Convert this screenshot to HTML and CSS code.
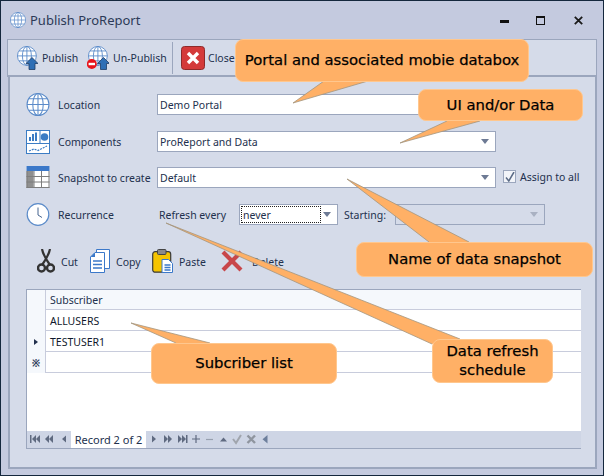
FILE: index.html
```html
<!DOCTYPE html>
<html lang="en">
<head>
<meta charset="utf-8">
<title>Publish ProReport</title>
<link rel="stylesheet" href="styles.css">
</head>
<body>
<svg class="defs" width="0" height="0" aria-hidden="true">
  <defs>
    <g id="globe" fill="none" stroke="#5b8bc9" stroke-width="1">
      <circle cx="11" cy="11" r="10.5" fill="#fff"/>
      <ellipse cx="11" cy="11" rx="5" ry="10.5"/>
      <path d="M11 .5v21M.5 11h21M2.3 5.5h17.4M2.3 16.5h17.4"/>
    </g>
    <g id="uparrow">
      <path d="M5.5 0 11.5 6H8.5V12H2.5V6H-.5Z" fill="#2f6fb5" stroke="#1f3d66" stroke-width=".8"/>
    </g>
  </defs>
</svg>
<div class="window">
  <header class="titlebar">
    <svg class="title-icon" width="16" height="16" viewBox="0 0 22 22"><use href="#globe"/></svg>
    <span class="title-text">Publish ProReport</span>
    <div class="controls">
      <span class="ctl-min"></span>
      <span class="ctl-max"></span>
      <svg class="ctl-close" width="9" height="9" viewBox="0 0 9 9"><path d="M.8.8l7.4 7.4M8.2.8.8 8.2" stroke="#1a1a1a" stroke-width="1.8"/></svg>
    </div>
  </header>
  <div class="toolbar">
    <div class="tool tool-publish">
      <svg width="21" height="24" viewBox="0 0 21 24"><g transform="scale(.9)"><use href="#globe"/></g><use href="#uparrow" x="9.5" y="11.5"/></svg>
      <span>Publish</span>
    </div>
    <div class="tool tool-unpublish">
      <svg width="22" height="24" viewBox="0 0 22 24"><g transform="translate(1 0) scale(.9)"><use href="#globe"/></g><use href="#uparrow" x="11" y="11.5"/><circle cx="4.8" cy="18" r="5" fill="#e8141c"/><rect x="1.6" y="16.8" width="6.4" height="2.4" fill="#fff"/></svg>
      <span>Un-Publish</span>
    </div>
    <div class="sep"></div>
    <div class="tool tool-close">
      <svg width="24" height="24" viewBox="0 0 24 24"><rect x=".5" y=".5" width="23" height="23" rx="3" fill="#d43a3a" stroke="#8e2a2a"/><path d="M7 7l10 10M17 7 7 17" stroke="#fff" stroke-width="3.4"/></svg>
      <span>Close</span>
    </div>
  </div>
  <main class="panel">
    <div class="form">
      <div class="row">
        <svg class="row-icon" width="23" height="23" viewBox="0 0 22 22"><use href="#globe"/></svg>
        <span class="row-label">Location</span>
        <div class="field field-wide">Demo Portal</div>
      </div>
      <div class="row">
        <svg class="row-icon" width="24" height="24" viewBox="0 0 24 24">
          <rect x=".5" y=".5" width="23" height="23" fill="#fff" stroke="#3b7cc4"/>
          <path d="M.5 13.5h23M14 .5v13" stroke="#3b7cc4"/>
          <path d="M3 11V7h2v4zM6 11V4h2v7zM9 11V2.500h2V11z" fill="#3b7cc4"/>
          <circle cx="18.500" cy="7" r="3.800" fill="#3b7cc4"/>
          <path d="M3 21l5-2 4 1.500 5-2.500 4-2" fill="none" stroke="#3b7cc4" stroke-width="1.200" stroke-dasharray="2 1"/>
        </svg>
        <span class="row-label">Components</span>
        <div class="field field-wide field-combo">ProReport and Data<i class="caret"></i></div>
      </div>
      <div class="row">
        <svg class="row-icon" width="23" height="22" viewBox="0 0 23 22">
          <rect width="23" height="22" fill="#fff"/>
          <rect width="23" height="5" fill="#3b78c9"/>
          <rect y="5" width="7" height="17" fill="#8f8f8f"/>
          <path d="M7.500 5v17M15 5v17M0 10.500h23M0 16h23M.5 5v17M22.500 5v17M0 21.500h23" stroke="#7d7d7d"/>
        </svg>
        <span class="row-label">Snapshot to create</span>
        <div class="field field-wide field-combo">Default<i class="caret"></i></div>
        <span class="check"><svg width="10" height="10" viewBox="0 0 10 10"><path d="M1 5.500 3.800 9 9 0" fill="none" stroke="#5a6a85" stroke-width="1.500"/></svg></span>
        <span class="check-label">Assign to all</span>
      </div>
      <div class="row">
        <svg class="row-icon" width="23" height="23" viewBox="0 0 23 23"><circle cx="11.500" cy="11.500" r="10.800" fill="#fff" stroke="#5b8bc9" stroke-width="1.200"/><path d="M11.500 4.500v7.500l4 2.500" fill="none" stroke="#46648f" stroke-width="1"/></svg>
        <span class="row-label">Recurrence</span>
        <span class="refresh-label">Refresh every</span>
        <div class="field field-never"><span class="focus">never</span><i class="caret"></i></div>
        <span class="starting-label">Starting:</span>
        <div class="field field-disabled"><i class="caret caret-dim"></i></div>
      </div>
    </div>
    <div class="actions">
      <div class="act act-cut">
        <svg width="18" height="24" viewBox="0 0 18 24"><path d="M5 0c1 5 3 9 8 16M13 0c-1 5-3 9-8 16" fill="none" stroke="#333" stroke-width="2.200"/><circle cx="4.500" cy="19" r="3.500" fill="none" stroke="#333" stroke-width="2.400"/><circle cx="13.500" cy="19" r="3.500" fill="none" stroke="#333" stroke-width="2.400"/></svg>
        <span>Cut</span>
      </div>
      <div class="act act-copy">
        <svg width="20" height="24" viewBox="0 0 20 24"><path d="M6.500.5h13v19h-13z" fill="#fff" stroke="#3b78c9"/><path d="M5 3.500h9.500v20H.500V8z" fill="#fff" stroke="#3b78c9"/><path d="M.5 8 5 3.500V8z" fill="#3b78c9"/><path d="M3 12h9M3 15.500h9M3 19h9" stroke="#3b78c9" stroke-width="1.400"/></svg>
        <span>Copy</span>
      </div>
      <div class="act act-paste">
        <svg width="21" height="24" viewBox="0 0 21 24"><rect x=".7" y="2.700" width="18" height="20.500" rx="2.500" fill="#f5c400" stroke="#3a3a3a" stroke-width="1.200"/><rect x="5.500" y=".5" width="8.500" height="5" rx="1" fill="#8a8a8a" stroke="#444"/><path d="M10 10.500h6.500l4 4v9H10z" fill="#fff" stroke="#3b78c9"/><path d="M12.500 16h6M12.500 18.500h6M12.500 21h6" stroke="#3b78c9" stroke-width="1.300"/></svg>
        <span>Paste</span>
      </div>
      <div class="act act-delete">
        <svg width="24" height="22" viewBox="0 0 24 22"><path d="M3 2l18 18M21 2 3 20" stroke="#c8464a" stroke-width="4.200"/></svg>
        <span>Delete</span>
      </div>
    </div>
    <section class="grid">
      <div class="grid-row grid-head"><span class="ind"></span><span class="cell">Subscriber</span></div>
      <div class="grid-row"><span class="ind"></span><span class="cell cell-data">ALLUSERS</span></div>
      <div class="grid-row"><span class="ind"><i class="cur"></i></span><span class="cell cell-data">TESTUSER1</span></div>
      <div class="grid-row"><span class="ind ind-new">&#x203B;</span><span class="cell"></span></div>
      <div class="grid-space"></div>
      <div class="nav">
        <svg width="44" height="17" viewBox="0 0 44 17" fill="#5f6a80"><path d="M3 4h1.500v8H3zM9 4v8L5 8zM13 4v8L9 8zM22 4v8l-4-4zM26 4v8l-4-4zM39 4.500v7l-4-3.500z"/></svg>
        <span class="record">Record 2 of 2</span>
        <svg width="125" height="17" viewBox="0 0 125 17"><g fill="#5f6a80"><path d="M6 4.500v7l4-3.500zM18 4v8l4-4zM22 4v8l4-4zM32 4v8l4-4zM36 4v8l4-4zM40 4h1.500v8H40z"/><path d="M46 8h8M50 4v8" stroke="#5f6a80" stroke-width="1.200"/></g><path d="M60 8.500h7" stroke="#98a0b0" stroke-width="1.200"/><path d="M74 10.500l3.500-4 3.500 4z" fill="#5f6a80"/><path d="M87 8l3 4 5-8" fill="none" stroke="#a0a5ad" stroke-width="2"/><path d="M101.500 4.500l7.500 7.500M109 4.500 101.500 12" stroke="#8f959f" stroke-width="2.400"/><path d="M121.500 4v8.500l-5-4.200z" fill="#6d7f9c"/></svg>
      </div>
    </section>
  </main>
</div>
<svg class="tails" width="604" height="476" viewBox="0 0 604 476" aria-hidden="true">
  <g fill="#ffb066" stroke="#a3957f" stroke-width=".8">
    <path d="M324 81 293 103 368 81"/>
    <path d="M447 121 400 143 480 121"/>
    <path d="M429 242 347 179 469 242"/>
    <path d="M432 344 166 223 460 339"/>
    <path d="M176 343 131 323 210 343"/>
  </g>
</svg>
<div class="callout c-portal">Portal and associated mobie databox</div>
<div class="callout c-ui">UI and/or Data</div>
<div class="callout c-name">Name of data snapshot</div>
<div class="callout c-refresh">Data refresh<br>schedule</div>
<div class="callout c-list">Subcriber list</div>
</body>
</html>
```
FILE: styles.css
```css
* { box-sizing: border-box; }
html, body { margin: 0; padding: 0; }
body {
  width: 604px;
  height: 476px;
  position: relative;
  overflow: hidden;
  font-family: "Noto Sans", "Liberation Sans", sans-serif;
  font-size: 10.5px;
  color: #22304d;
}
.defs { position: absolute; }
.window {
  width: 604px;
  height: 476px;
  background: #c4cadf;
  border: 1px solid #14273d;
  display: flex;
  flex-direction: column;
  padding: 0 6px 6px;
}
.titlebar {
  height: 38px;
  flex: none;
  display: flex;
  align-items: center;
  padding: 0 0 0 3px;
}
.title-icon { flex: none; }
.title-text { margin-left: 4px; font-size: 13px; color: #2c3a57; }
.controls { margin-left: auto; display: flex; align-items: center; }
.ctl-min { width: 9px; height: 3px; background: #111; margin-top: 3px; }
.ctl-max { width: 9px; height: 9px; border: 1px solid #111; border-top-width: 2px; margin-left: 27px; margin-top: 0; }
.ctl-close { margin-left: 29px; margin-right: 14px; }
.toolbar {
  height: 38px;
  flex: none;
  background: #d5dbe9;
  border: 1px solid #9ba6bd;
  border-bottom: 2px solid #9ba6bd;
  display: flex;
  align-items: center;
  padding-left: 9px;
}
.tool { display: flex; align-items: center; }
.tool span { margin-left: 4px; }
.tool-publish { width: 70px; flex: none; }
.tool-unpublish { width: 85px; flex: none; }
.sep { width: 1px; height: 32px; background: #9ba6bd; margin: 0 8px 0 0; }
.tool-close span { margin-left: 3px; }
.panel {
  flex: 1;
  background: #d5dbe9;
  border: 2px solid #9ba6bd;
  border-top: 0;
  margin: 0 0 0 1px;
  padding: 17px 14px 0 16px;
  display: flex;
  flex-direction: column;
}
.form {
  display: grid;
  grid-template-rows: 37px 36px 37px 21px;
}
.row { display: flex; align-items: flex-start; height: 21px; }
.row-icon { flex: none; width: 24px; margin-top: -1px; }
.row-label { width: 99px; flex: none; margin-left: 8px; line-height: 23px; white-space: nowrap; }
.field {
  height: 21px;
  background: #fff;
  border: 1px solid #9ba6bd;
  line-height: 21px;
  padding-left: 2px;
  position: relative;
}
.field-wide { width: 339px; flex: none; }
.caret {
  position: absolute;
  right: 6px;
  top: 7px;
  width: 0;
  height: 0;
  border: 4px solid transparent;
  border-top: 5px solid #6d7a94;
  border-bottom: 0;
}
.caret-dim { border-top-color: #a9b1c2; }
.check {
  width: 13px;
  height: 13px;
  margin-left: 7px;
  margin-top: 3px;
  border: 1px solid #9ba6bd;
  background: #f2f4f9;
  display: flex;
  align-items: center;
  justify-content: center;
  flex: none;
}
.check-label { margin-left: 4px; line-height: 21px; white-space: nowrap; }
.refresh-label { margin-left: 2px; width: 80px; flex: none; line-height: 23px; white-space: nowrap; }
.field-never { width: 99px; flex: none; padding: 1px 0 0 1px; line-height: 17px; }
.focus { display: block; width: 80px; height: 17px; border: 1px dotted #222; padding-left: 1px; line-height: 17px; }
.starting-label { margin-left: 6px; width: 51px; flex: none; line-height: 23px; }
.field-disabled { width: 150px; flex: none; background: transparent; }
.actions { display: flex; align-items: center; height: 24px; margin-top: 24px; padding-left: 11px; }
.act { display: flex; align-items: center; flex: none; }
.act span { margin-left: 6px; margin-top: 2px; }
.act-cut { width: 53px; }
.act-copy { width: 62px; }
.act-paste { width: 68px; }
.act-delete span { margin-left: 8px; }
.grid {
  margin-top: 16px;
  height: 160px;
  width: 555px;
  background: #fff;
  border: 1px solid #9ba6bd;
  border-right: 0;
  display: flex;
  flex-direction: column;
}
.grid-row { height: 21px; flex: none; display: flex; border-bottom: 1px solid #c8ccdc; }
.grid-head { height: 20px; background: #f5f8fc; }
.ind {
  width: 18px;
  flex: none;
  background: #f5f8fc;
  margin-bottom: -1px;
  display: flex;
  align-items: center;
  justify-content: center;
  font-size: 10px;
  font-weight: 700;
  color: #2c3a57;
}
.cur { width: 0; height: 0; border: 3.500px solid transparent; border-left: 4px solid #22304d; border-right: 0; }
.cell { flex: 1; border-left: 1px solid #c8ccdc; padding-left: 4px; line-height: 20px; }
.cell-data { color: #10182c; line-height: 22px; }
.grid-space { flex: 1; }
.nav { height: 17px; flex: none; background: #ced5e5; display: flex; }
.record { width: 75px; flex: none; background: #fff; text-align: center; line-height: 18px; font-size: 11px; }
.tails { position: absolute; left: 0; top: 0; }
.callout {
  position: absolute;
  display: flex;
  align-items: center;
  justify-content: center;
  text-align: center;
  background: #ffb066;
  border: 1px solid #ffc78e;
  border-radius: 8px;
  padding-bottom: 2px;
  font-family: "DejaVu Sans", sans-serif;
  font-size: 14.8px;
  -webkit-text-stroke: .25px #000;
  line-height: 19px;
  color: #000;
}
.c-portal { left: 235px; top: 39px; width: 294px; height: 43px; }
.c-ui { left: 418px; top: 89px; width: 165px; height: 32px; }
.c-name { left: 356px; top: 242px; width: 237px; height: 35px; }
.c-refresh { left: 432px; top: 339px; width: 121px; height: 44px; }
.c-list { left: 151px; top: 343px; width: 186px; height: 41px; }
```
